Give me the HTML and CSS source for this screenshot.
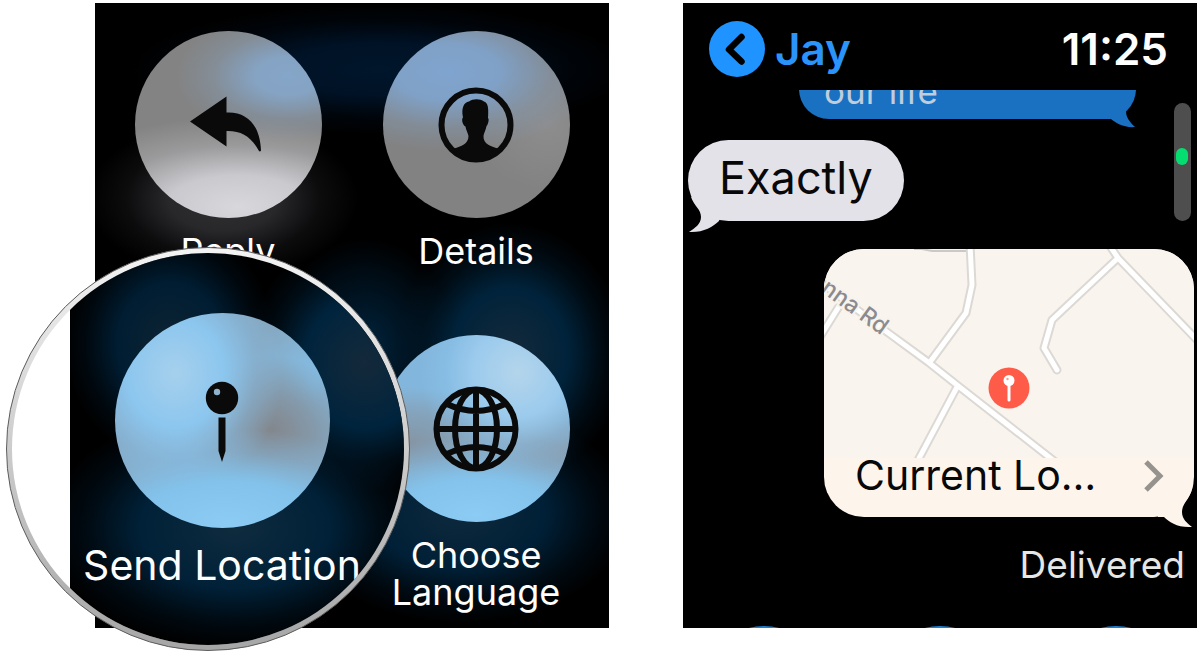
FILE: index.html
```html
<!DOCTYPE html>
<html lang="en">
<head>
<meta charset="utf-8">
<title>Messages on watch</title>
<link rel="stylesheet" href="styles.css">
</head>
<body>
<main class="stage">
  <section class="watch menu">
    <div class="menu-grid">
      <button class="action" type="button">
        <span class="disc disc-reply">
          <svg class="icon" viewBox="0 0 90 90" aria-hidden="true"><path fill="#0a0a0a" d="M7 41.500 43.500 16.500V32.500C64 31.500 77 45 78 70.500Q77 72 76 71C68.500 57 58.500 50.500 43.500 51V66.500Z"/></svg>
        </span>
        <span class="label">Reply</span>
      </button>
      <button class="action" type="button">
        <span class="disc disc-details">
          <svg class="icon" viewBox="0 0 90 90" aria-hidden="true">
            <circle cx="45" cy="45" r="34.500" fill="none" stroke="#0a0a0a" stroke-width="6"/>
            <path fill="#0a0a0a" d="M32 37.500C30 28 33 22 38 21.500 42 18.500 49 18.500 53 21.500 57.500 23 57.500 29 57 38 58.500 39 57 45 55.500 46 54.500 51 53 53 52.500 56 52 64 60 66.500 67 68.500L66 73C54 85 36 85 24 73L23 68.500C30 66.500 37.500 64 37.500 56 36.500 52 35 50 34.500 46.500 32 46 30 39 32 37.500Z"/>
          </svg>
        </span>
        <span class="label">Details</span>
      </button>
      <div class="slot"></div>
      <button class="action" type="button">
        <span class="disc disc-language">
          <svg class="icon" viewBox="0 0 90 90" aria-hidden="true">
            <g fill="none" stroke="#0a0a0a" stroke-width="6">
              <circle cx="45" cy="45" r="39.500"/>
              <ellipse cx="45" cy="45" rx="21" ry="39"/>
              <path d="M45 6V84M6 45H84M16 20Q45 34 74 20M16 70Q45 56 74 70"/>
            </g>
          </svg>
        </span>
        <span class="label">Choose<br>Language</span>
      </button>
    </div>

    <div class="lens">
      <div class="lens-view">
        <button class="lens-screen" type="button">
          <span class="disc disc-location">
            <svg class="icon" viewBox="0 0 90 90" aria-hidden="true">
              <circle cx="45" cy="22" r="16.200" fill="#0a0a0a"/>
              <circle cx="40" cy="16" r="3.200" fill="#8fb3cc"/>
              <path fill="#0a0a0a" d="M41.500 41.500h7V75L45 86 41.500 75Z"/>
            </svg>
          </span>
          <span class="label label-large">Send Location</span>
        </button>
      </div>
    </div>
  </section>

  <section class="watch chat">
    <header class="bar">
      <button class="back" type="button">
        <svg class="back-icon" viewBox="0 0 56 56" aria-hidden="true"><circle cx="28" cy="28" r="28" fill="#1f93ff"/><path d="M32.500 16 20 28.500 32.500 40.500" fill="none" stroke="#000" stroke-width="6.500" stroke-linecap="round" stroke-linejoin="round"/></svg>
        <span>Jay</span>
      </button>
      <time class="clock">11:25</time>
    </header>

    <div class="thread">
      <div class="bubble sent-text">our life
        <svg class="tail tail-sent" viewBox="0 0 32 44" aria-hidden="true"><path fill="#1a70c1" d="M0 0H32C32 14 22 18 22 27 22 34 26 38 31 43 20 44 12 39 7 35H0Z"/></svg>
      </div>
      <div class="bubble received">Exactly
        <svg class="tail tail-received" viewBox="0 0 36 40" aria-hidden="true"><path fill="#e4e2e9" d="M3 4C6 13 13 16 13 24 13 31 7 35 1 39 14 40 25 34 31 28L36 10Z"/></svg>
      </div>
      <a class="bubble place" href="#">
        <svg class="map" viewBox="0 0 370 209" preserveAspectRatio="xMidYMid slice" role="img" aria-label="Map">
          <rect width="370" height="209" fill="#f9f4ed"/>
          <path d="M90 0h8M98 0l10 2h38" fill="none" stroke="#cbc9c7" stroke-width="2"/>
          <g fill="none" stroke-linejoin="round" stroke-linecap="round">
            <path stroke="#dcd9d5" stroke-width="9" d="M-12 27 63 83 104 113 133 136 234 215M146-5 148 36 142 64 106 113M133 138 92 215M14 59-4 88M284-6 294 9 376 94M294 9 228 71 220 99 233 121"/>
            <path stroke="#fff" stroke-width="5" d="M-12 27 63 83 104 113 133 136 234 215M146-5 148 36 142 64 106 113M133 138 92 215M14 59-4 88M284-6 294 9 376 94M294 9 228 71 220 99 233 121"/>
          </g>
          <text class="road-name" transform="translate(-4 42) rotate(36)">nna Rd</text>
          <circle cx="185" cy="139" r="20.500" fill="#ff5b49"/>
          <circle cx="185" cy="131.500" r="5.500" fill="#fff"/>
          <circle cx="183.500" cy="130" r="1.200" fill="#ff9a8e"/>
          <path d="M185 137V151" stroke="#fff" stroke-width="3" stroke-linecap="round"/>
        </svg>
        <span class="place-row">
          <span>Current Lo…</span>
          <svg class="chevron" viewBox="0 0 20 32" aria-hidden="true"><path d="M2 2 16 16 2 30" fill="none" stroke="#96938e" stroke-width="5"/></svg>
        </span>
        <svg class="tail tail-place" viewBox="0 0 36 44" aria-hidden="true"><path fill="#fdf5ec" d="M0 0H35C34 14 24 18 24 28 24 35 29 39 34 43 20 44 11 38 6 33H0Z"/></svg>
      </a>
      <p class="status">Delivered</p>
    </div>

    <div class="quick">
      <span class="quick-disc"></span><span class="quick-disc"></span><span class="quick-disc"></span>
    </div>
    <div class="scroll"><div class="scroll-thumb"></div></div>
  </section>
</main>
</body>
</html>
```

FILE: styles.css
```css
* { box-sizing: border-box; }

body {
  margin: 0;
  background: #fff;
  font-family: Inter, "Liberation Sans", sans-serif;
}

button {
  margin: 0;
  padding: 0;
  border: 0;
  background: none;
  color: inherit;
  font: inherit;
}

.stage {
  display: grid;
  grid-template-columns: 1fr 1fr;
  gap: 74px;
  padding: 3px 3px 29px 95px;
}

.watch {
  position: relative;
  min-width: 0;
  background-color: #000;
  color: #fff;
}

/* Action menu */
.menu {
  padding: 28px 9px 17px;
  background-image:
    radial-gradient(ellipse 135px 80px at 128px 196px, #303033, #28282b 40%, rgba(30, 30, 33, 0.4) 72%, transparent),
    radial-gradient(ellipse 250px 65px at 285px 66px, #00162b, #001226 40%, rgba(0, 14, 30, 0.4) 72%, transparent),
    radial-gradient(ellipse 115px 130px at 415px 350px, #15293a, #00233b 50%, rgba(0, 28, 48, 0.4) 78%, transparent),
    radial-gradient(ellipse 90px 110px at 270px 345px, #00243d, rgba(0, 30, 52, 0.5) 60%, transparent),
    radial-gradient(ellipse 170px 110px at 365px 510px, #0e293c, #002037 50%, rgba(0, 26, 45, 0.4) 78%, transparent);
}

.menu-grid {
  display: grid;
  grid-template-columns: 1fr 1fr;
  row-gap: 65px;
}

.action {
  display: flex;
  flex-direction: column;
  align-items: center;
  justify-content: flex-start;
}

.disc {
  display: flex;
  align-items: center;
  justify-content: center;
  width: 187px;
  height: 187px;
  border-radius: 50%;
}

.icon { width: 90px; height: 90px; }

.label {
  margin-top: 15px;
  font-size: 36px;
  line-height: 37px;
  text-align: center;
  white-space: nowrap;
}

.disc-reply {
  background:
    radial-gradient(ellipse 60% 34% at 82% 24%, #85a6c9, #85a3c3 30%, rgba(133, 155, 178, 0.4) 68%, transparent),
    radial-gradient(ellipse 110% 48% at 55% 94%, #d8d7dc, #cac9ce 35%, rgba(190, 190, 194, 0.4) 68%, transparent),
    #838383;
}

.disc-details {
  background:
    radial-gradient(ellipse 80% 42% at 34% 22%, #7fa4ce, #80a1c7 35%, rgba(130, 155, 182, 0.4) 70%, transparent),
    radial-gradient(ellipse 40% 35% at 88% 50%, #8d8d8e, transparent),
    #828282;
}

.disc-language {
  background:
    radial-gradient(ellipse 52% 52% at 72% 20%, #b4d5eb, #9ccbed 45%, rgba(140, 198, 238, 0.4) 75%, transparent),
    radial-gradient(ellipse 90% 42% at 50% 96%, #8ccbf4, #84c3ec 45%, rgba(132, 190, 230, 0.4) 75%, transparent),
    radial-gradient(ellipse 55% 32% at 14% 60%, #8594a2, rgba(133, 150, 165, 0.6) 55%, transparent),
    radial-gradient(ellipse 60% 32% at 82% 64%, #8896a4, rgba(136, 152, 168, 0.6) 55%, transparent),
    #83b6dc;
}

/* Magnifier over the lower left action */
.lens {
  position: absolute;
  top: 244px;
  left: -89px;
  width: 404px;
  height: 404px;
  padding: 5px;
  border: 1px solid #5c5c5c;
  border-radius: 50%;
  background: linear-gradient(#f4f4f4, #d0d0d0 45%, #a6a6a6);
}

.lens-view {
  height: 100%;
  padding-left: 58px;
  overflow: hidden;
  border-radius: 50%;
  background: #fff;
}

.lens-screen {
  display: flex;
  flex-direction: column;
  align-items: center;
  justify-content: flex-start;
  width: 100%;
  height: 100%;
  padding: 60px 30px 0 0;
  background:
    radial-gradient(ellipse 105px 120px at 100px 90px, #0e2432, #001d32 50%, rgba(0, 24, 42, 0.4) 78%, transparent),
    radial-gradient(ellipse 120px 130px at 295px 110px, #14293a, #00243d 50%, rgba(0, 28, 48, 0.4) 78%, transparent),
    radial-gradient(ellipse 190px 120px at 165px 275px, #0f2b3e, #002138 50%, rgba(0, 26, 45, 0.4) 78%, transparent),
    #000;
  color: #fff;
}

.disc-location {
  width: 215px;
  height: 215px;
  flex: none;
  background:
    radial-gradient(ellipse 50% 56% at 28% 28%, #a6d0ed, #8cc6ee 45%, rgba(135, 190, 230, 0.4) 75%, transparent),
    radial-gradient(ellipse 95% 44% at 52% 98%, #8ccbf4, #83c2eb 45%, rgba(132, 185, 222, 0.4) 75%, transparent),
    radial-gradient(ellipse 42% 34% at 72% 54%, #83878d, rgba(132, 143, 154, 0.7) 50%, transparent),
    radial-gradient(ellipse 30% 40% at 92% 34%, #83c0ea, transparent),
    #86a6be;
}

.label-large {
  margin-top: 15px;
  font-size: 41px;
  line-height: 44px;
}

/* Conversation */
.chat {
  display: flex;
  flex-direction: column;
  overflow: hidden;
}

.bar {
  display: flex;
  align-items: center;
  justify-content: space-between;
  padding: 18px 29px 13px 26px;
  font-size: 44px;
  font-weight: 600;
  line-height: 56px;
}

.back {
  display: flex;
  align-items: center;
  gap: 10px;
  color: #2b94fb;
}

.back-icon { width: 56px; height: 56px; }

.thread {
  display: flex;
  flex: 1;
  flex-direction: column;
  align-items: flex-start;
  overflow: hidden;
}

.bubble { position: relative; }

.tail { position: absolute; }

.sent-text {
  align-self: flex-end;
  width: 337px;
  margin: -32px 61px 0 0;
  padding: 11px 25px 6px;
  border-radius: 30px;
  background: #1a70c1;
  color: #bfcddd;
  font-size: 35px;
  line-height: 44px;
}

.tail-sent {
  right: 0;
  bottom: -9px;
  width: 32px;
  height: 44px;
}

.received {
  margin: 21px 0 0 5px;
  padding: 12px 31px 17px;
  border-radius: 41px;
  background: #e4e2e9;
  color: #080808;
  font-size: 45px;
  line-height: 52px;
}

.tail-received {
  left: 0;
  bottom: -12px;
  width: 36px;
  height: 40px;
}

.place {
  display: block;
  align-self: flex-end;
  width: 370px;
  margin: 28px 3px 0 0;
  border-radius: 40px;
  background: #fdf4eb;
  color: #080808;
  text-decoration: none;
}

.map {
  display: block;
  width: 100%;
  height: 209px;
  border-radius: 40px 40px 0 0;
}

.road-name {
  fill: #8b8b8f;
  stroke: #f8f4ed;
  stroke-width: 4px;
  paint-order: stroke;
  font-size: 23px;
  font-weight: 500;
}

.place-row {
  display: flex;
  align-items: center;
  justify-content: space-between;
  padding: 0 30px 24px 31px;
  font-size: 41px;
  line-height: 35px;
}

.chevron { width: 20px; height: 32px; }

.tail-place {
  right: 0;
  bottom: -11px;
  width: 36px;
  height: 44px;
}

.status {
  align-self: flex-end;
  margin: 26px 12px 0 0;
  color: #e6e6e6;
  font-size: 37px;
  line-height: 44px;
}

.quick {
  display: flex;
  justify-content: center;
  gap: 56px;
  height: 2px;
  overflow: hidden;
}

.quick-disc {
  flex: none;
  width: 120px;
  height: 120px;
  border-radius: 50%;
  background: #1d7fd0;
}

.scroll {
  position: absolute;
  top: 100px;
  right: 6px;
  width: 17px;
  height: 118px;
  padding: 45px 3px 0 2px;
  border-radius: 9px;
  background: #4e4e4e;
}

.scroll-thumb {
  height: 17px;
  border-radius: 6px;
  background: #04de71;
}
```
